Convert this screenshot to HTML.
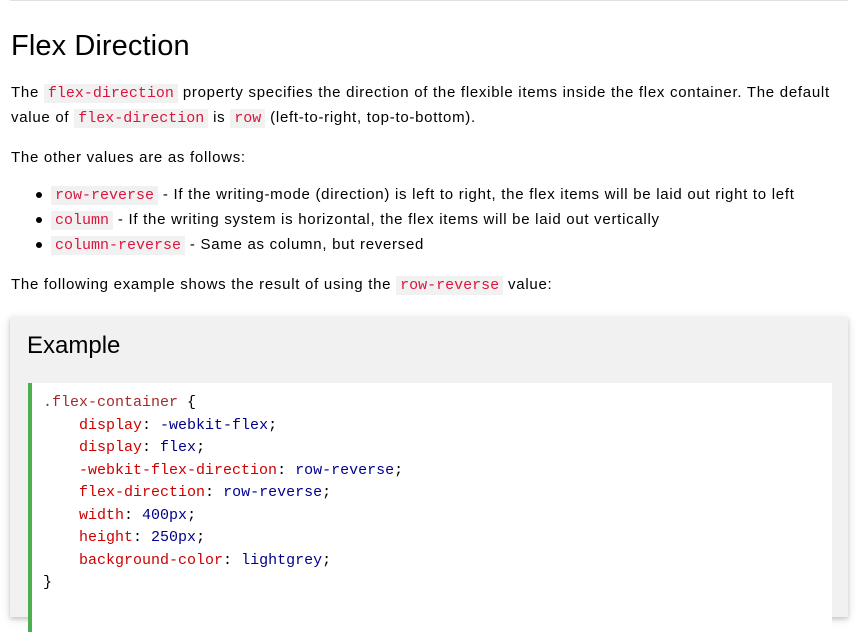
<!DOCTYPE html>
<html><head><style>
body{margin:0;width:857px;height:600px;overflow:hidden;background:#fff;font-family:"Liberation Sans",sans-serif;font-size:15px;color:#000}
.top{position:absolute;left:10px;top:0;width:838px;height:1px;background:#e0e0e0}
.t{position:absolute;left:11px;white-space:nowrap;line-height:25px;letter-spacing:0.72px}
h1{position:absolute;left:11px;top:26px;margin:0;font-weight:normal;font-size:29px;line-height:40px;letter-spacing:0.1px}
code{font-family:"Liberation Mono",monospace;font-size:15px;color:#dc143c;background:#f1f1f1;padding:1px 4px;letter-spacing:0}
.li{position:absolute;left:51px;white-space:nowrap;line-height:25px;letter-spacing:0.72px}
.li:before{content:"";position:absolute;left:-15px;top:10px;width:6px;height:6px;border-radius:50%;background:#000}
.ex{position:absolute;left:10px;top:317px;width:838px;height:300px;background:#f1f1f1;box-shadow:0 2px 4px rgba(0,0,0,.16),0 2px 10px rgba(0,0,0,.12)}
.ex h2{position:absolute;left:17px;top:14px;margin:0;font-weight:normal;font-size:24px;line-height:30px}
.code{position:absolute;left:18px;top:66px;width:789px;height:240px;background:#fff;border-left:4px solid #4caf50;padding:9px 0 0 11px;font-family:"Liberation Mono",monospace;font-size:15px;line-height:22.5px;white-space:pre;color:#000}
.s{color:#a52a2a}.p{color:#c00}.v{color:#00008b}
</style></head><body>
<div class="top"></div>
<h1>Flex Direction</h1>
<div class="t" style="top:80px">The <code>flex-direction</code> property specifies the direction of the flexible items inside the flex container. The default</div>
<div class="t" style="top:105px">value of <code>flex-direction</code> is <code>row</code> (left-to-right, top-to-bottom).</div>
<div class="t" style="top:145px">The other values are as follows:</div>
<div class="li" style="top:182px"><code>row-reverse</code> - If the writing-mode (direction) is left to right, the flex items will be laid out right to left</div>
<div class="li" style="top:207px"><code>column</code> - If the writing system is horizontal, the flex items will be laid out vertically</div>
<div class="li" style="top:232px"><code>column-reverse</code> - Same as column, but reversed</div>
<div class="t" style="top:272px">The following example shows the result of using the <code>row-reverse</code> value:</div>
<div class="ex"><h2>Example</h2>
<div class="code"><span class="s">.flex-container</span> {
    <span class="p">display</span>: <span class="v">-webkit-flex</span>;
    <span class="p">display</span>: <span class="v">flex</span>;
    <span class="p">-webkit-flex-direction</span>: <span class="v">row-reverse</span>;
    <span class="p">flex-direction</span>: <span class="v">row-reverse</span>;
    <span class="p">width</span>: <span class="v">400px</span>;
    <span class="p">height</span>: <span class="v">250px</span>;
    <span class="p">background-color</span>: <span class="v">lightgrey</span>;
}</div></div>
</body></html>
